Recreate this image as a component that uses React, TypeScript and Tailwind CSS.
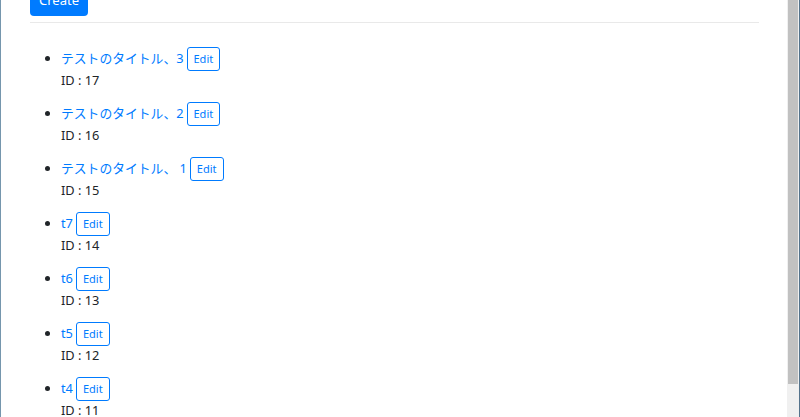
const items = [
  { title: "テストのタイトル、3", id: 17 },
  { title: "テストのタイトル、2", id: 16 },
  { title: "テストのタイトル、 1", id: 15 },
  { title: "t7", id: 14 },
  { title: "t6", id: 13 },
  { title: "t5", id: 12 },
  { title: "t4", id: 11 },
];

export default function App() {
  return (
    <div
      className="flex h-[417px] w-[800px] overflow-hidden bg-white border-l border-[#7596ad]"
      style={{ fontFamily: '"Noto Sans", "Noto Sans CJK JP", sans-serif' }}
    >
      {/* page content */}
      <div className="flex-1 pl-[29px] pr-[28px]">
        <button className="-mt-[15px] block h-[31px] rounded-[4px] bg-[#007bff] px-[9px] text-[13px] text-white leading-[31px]">
          Create
        </button>
        <hr className="mt-[6px] border-t border-[#e9e9e9]" />

        <ul className="mt-[24px] list-disc pl-[31px] text-[12.8px] leading-[19px] text-[#212529]">
          {items.map((item) => (
            <li key={item.id} className="mb-[12px]">
              <div className="flex h-[24px] items-baseline gap-[3px]">
                <a href="#" className="text-[#007bff] whitespace-pre">
                  {item.title}
                </a>
                <button className="h-[24px] rounded-[3px] border border-[#007bff] px-[6px] text-[11px] leading-[22px] text-[#007bff]">
                  Edit
                </button>
              </div>
              <p>ID : {item.id}</p>
            </li>
          ))}
        </ul>
      </div>

      {/* scrollbar */}
      <div className="flex h-full w-[12px] flex-col bg-[#f0f0f0]">
        <div className="ml-[1px] h-[384px] w-[10px] bg-[#c1c1c1]" />
      </div>
      <div className="h-full w-[1px] bg-[#54738c]" />
    </div>
  );
}
